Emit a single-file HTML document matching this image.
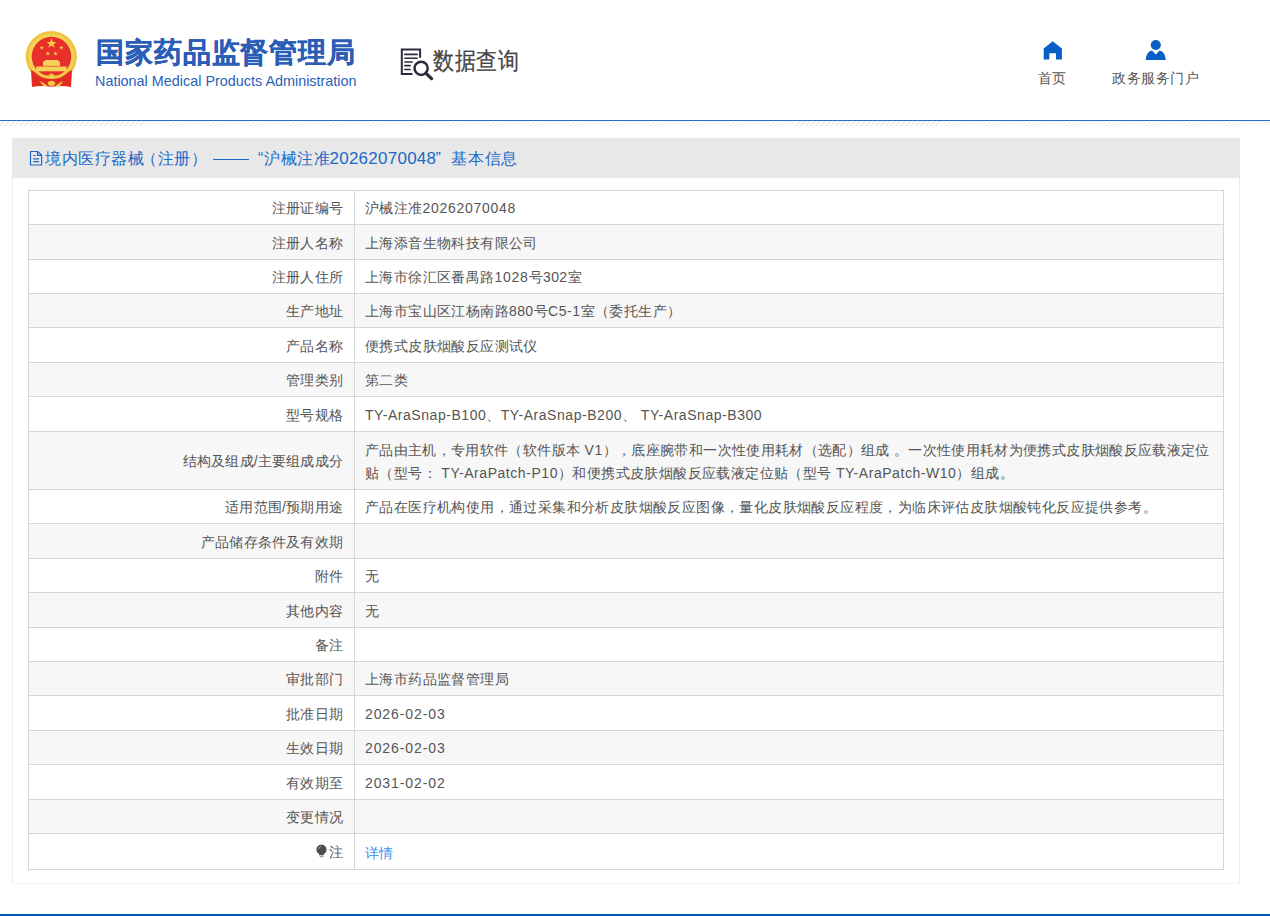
<!DOCTYPE html>
<html><head><meta charset="utf-8">
<style>
*{box-sizing:border-box;}
html,body{margin:0;padding:0;background:#fff;}
body{width:1270px;height:916px;overflow:hidden;position:relative;font-family:"Liberation Sans",sans-serif;color:#333;}
.hdr{position:absolute;left:0;top:0;width:1270px;height:121px;border-bottom:1px solid #2271c6;}
.hatch{position:absolute;left:0;top:121px;width:1270px;height:5px;
 background:repeating-linear-gradient(135deg,#fff 0,#fff 2.7px,#ececec 2.7px,#ececec 3.54px);}
.emb{position:absolute;left:20px;top:28px;width:62px;height:62px;}
.t1{position:absolute;left:96px;top:33px;font-size:28px;letter-spacing:0.9px;font-weight:bold;color:#2a5db6;white-space:nowrap;line-height:40px;-webkit-text-stroke:0.3px #2a5db6;}
.t2{position:absolute;left:95px;top:71px;font-size:14.4px;color:#2a5fb8;white-space:nowrap;line-height:20px;}
.dq{position:absolute;left:395px;top:44px;width:42px;height:38px;}
.dqt{position:absolute;left:433px;top:44px;font-size:21.5px;color:#454545;white-space:nowrap;line-height:34px;transform:scale(0.98,1.12);transform-origin:0 50%;-webkit-text-stroke:0.25px #454545;}
.nav{position:absolute;top:68px;font-size:14px;color:#555;line-height:20px;white-space:nowrap;}
.ico{position:absolute;}
.panel{position:absolute;left:12px;top:138px;width:1228px;height:746px;border:1px solid #ebebeb;border-top:none;border-bottom-color:#f3f3f3;}
.ph{position:absolute;left:-1px;top:0;width:1228px;height:40px;background:#e8e8e8;color:#1a6ac9;font-size:16px;line-height:40px;white-space:nowrap;}
.ph span{position:absolute;top:1px;letter-spacing:0.6px;}
.ph svg{position:absolute;left:16px;top:11px;}
table{position:absolute;left:15px;top:52px;width:1196px;border-collapse:collapse;font-size:14px;color:#555;table-layout:fixed;}
td{border:1px solid #d6d6d6;padding:2px 10px 0 10px;line-height:23px;vertical-align:middle;letter-spacing:0.4px;}
td.l{text-align:right;width:326px;padding-right:11px;letter-spacing:0.2px;}
tr.g td{background:#f7f7f7;}
td .d{letter-spacing:0.7px;}
td .e{letter-spacing:0.55px;}
td .d2{letter-spacing:0.9px;}
td .n{letter-spacing:0.35px;}
td a{color:#3d8ff0;text-decoration:none;position:relative;top:1px;}
.bulb{vertical-align:-1px;margin-right:2px;}
.foot{position:absolute;left:0;top:914px;width:1270px;height:2px;background:#0058be;}
</style></head><body>
<div class="hdr"></div>
<div class="hatch"></div>
<svg class="emb" viewBox="20 28 62 62">
 <circle cx="51.3" cy="56.6" r="25.6" fill="#f1c33c"/>
 <circle cx="51.3" cy="56.6" r="23" fill="#f6d257"/>
 <circle cx="51.5" cy="56.6" r="19.8" fill="#e8302a"/>
 <path d="M31 70 Q34 71.5 37 73 L51.5 77 L66 73 Q69 71.5 72 70 L71 87 Q61 85 51.5 86.8 Q42 85 32 87Z" fill="#e32b26"/>
 <path d="M34.5 68.5 Q42 76.5 51.5 75.5 Q61 76.5 68.5 68.5 L69.5 71 Q61 80 51.5 78.5 Q42 80 33.5 71Z" fill="#f2c840"/>
 <path d="M39.5 81 Q43 82 47.5 86 L44 86.5Z M63.5 81 Q60 82 55.5 86 L59 86.5Z" fill="#f4d04a"/>
 <ellipse cx="51.5" cy="83.3" rx="3.6" ry="2.6" fill="#f2c840"/>
 <circle cx="51.5" cy="76.2" r="2.6" fill="#f4cf48"/>
 <rect x="43" y="61.3" width="17" height="4.6" fill="#f6d45c"/>
 <rect x="45" y="60" width="13" height="2" fill="#f6d45c"/>
 <rect x="36.2" y="66.5" width="30.5" height="4.8" fill="#f6d45c"/>
 <polygon points="51.5,38.3 52.8,41.9 56.5,41.9 53.6,44.2 54.6,47.8 51.5,45.6 48.4,47.8 49.4,44.2 46.5,41.9 50.2,41.9" fill="#f5cf45"/>
 <polygon points="41.7,45.4 42.3,47 44,47 42.6,48 43.1,49.6 41.7,48.6 40.3,49.6 40.8,48 39.4,47 41.1,47" fill="#f2cc4a"/>
 <polygon points="61.3,45.4 61.9,47 63.6,47 62.2,48 62.7,49.6 61.3,48.6 59.9,49.6 60.4,48 59,47 60.7,47" fill="#f2cc4a"/>
 <polygon points="47.8,51.2 48.4,52.8 50.1,52.8 48.7,53.8 49.2,55.4 47.8,54.4 46.4,55.4 46.9,53.8 45.5,52.8 47.2,52.8" fill="#f2cc4a"/>
 <polygon points="55.5,51.2 56.1,52.8 57.8,52.8 56.4,53.8 56.9,55.4 55.5,54.4 54.1,55.4 54.6,53.8 53.2,52.8 54.9,52.8" fill="#f2cc4a"/>
</svg>
<div class="t1">国家药品监督管理局</div>
<div class="t2">National Medical Products Administration</div>
<svg class="dq" viewBox="395 44 42 38">
 <path d="M420.1 57.7 V49.6 H401.8 V73.9 H412.5" fill="none" stroke="#2b2b3b" stroke-width="2"/>
 <path d="M404.8 54.4 H417.2 M404.8 58.3 H417.2 M404.8 62 H412.2 M404.8 65.6 H410.2 M404.8 69.5 H410.2" stroke="#2b2b3b" stroke-width="1.6" stroke-linecap="round"/>
 <circle cx="421.1" cy="68.3" r="6.6" fill="none" stroke="#2b2b3b" stroke-width="2.5"/>
 <path d="M426.3 73.6 L431.6 78.6" stroke="#2b2b3b" stroke-width="3.2" stroke-linecap="round"/>
</svg>
<div class="dqt">数据查询</div>
<svg class="ico" style="left:1040px;top:38px" width="26" height="24" viewBox="1040 38 26 24"><path d="M1052.7 41.2 L1061.9 48.4 V59.4 H1056 V53.3 H1049.3 V59.4 H1043.7 V48.4Z" fill="#0a5fc6"/></svg>
<div class="nav" style="left:1038px;">首页</div>
<svg class="ico" style="left:1140px;top:36px" width="30" height="28" viewBox="1140 36 30 28"><circle cx="1155.8" cy="45" r="5.1" fill="#0a5fc6"/><path d="M1145.6 60 Q1146.2 52 1152 50.6 L1155.8 54.6 L1159.6 50.6 Q1165.2 52 1165.8 60Z" fill="#0a5fc6"/></svg>
<div class="nav" style="left:1112px;letter-spacing:0.5px">政务服务门户</div>

<div class="panel">
 <div class="ph"><svg width="16" height="18" viewBox="28 149 16 18"><path d="M30.5 151.5 H37.7 L41.6 155.2 V165 H30.5Z" fill="none" stroke="#1a6ac9" stroke-width="1.2" stroke-linejoin="round"/><path d="M37.5 151.5 V155.4 H41.6" fill="none" stroke="#1a6ac9" stroke-width="1.1"/><path d="M33.2 155.5 H35.6 M33.2 158.8 H39.1 M33.2 161.7 H39.1" stroke="#1a6ac9" stroke-width="1.2"/></svg><span style="left:33px">境内医疗器械</span><span style="left:129px">（注册）</span><i style="position:absolute;left:201px;top:20.6px;width:35.6px;height:1.4px;background:#1a6ac9;"></i><span style="left:246px;letter-spacing:0">“</span><span style="left:252px">沪械注准</span><span style="left:317.5px;font-size:17px;letter-spacing:0.25px">20262070048</span><span style="left:423.5px;letter-spacing:0">”</span><span style="left:439.4px">基本信息</span></div>
 <table>
<tr style="height:34px"><td class="l">注册证编号</td><td class="v">沪械注准<span class="d">20262070048</span></td></tr>
<tr class="g" style="height:35px"><td class="l">注册人名称</td><td class="v">上海添音生物科技有限公司</td></tr>
<tr style="height:34px"><td class="l">注册人住所</td><td class="v">上海市徐汇区番禺路<span class="d">1028</span>号302室</td></tr>
<tr class="g" style="height:34px"><td class="l">生产地址</td><td class="v">上海市宝山区江杨南路880号<span class="e">C5-1</span>室（委托生产）</td></tr>
<tr style="height:35px"><td class="l">产品名称</td><td class="v">便携式皮肤烟酸反应测试仪</td></tr>
<tr class="g" style="height:34px"><td class="l">管理类别</td><td class="v">第二类</td></tr>
<tr style="height:35px"><td class="l">型号规格</td><td class="v"><span class="e">TY-AraSnap-B100</span>、<span class="e">TY-AraSnap-B200</span>、 <span class="e">TY-AraSnap-B300</span></td></tr>
<tr class="g" style="height:58px"><td class="l">结构及组成/主要组成成分</td><td class="v"><span class="n">产品由主机，专用软件（软件版本 <span class="e">V1</span>），底座腕带和一次性使用耗材（选配）组成 。一次性使用耗材为便携式皮肤烟酸反应载液定位</span><br>贴（型号： <span class="e">TY-AraPatch-P10</span>）和便携式皮肤烟酸反应载液定位贴（型号 <span class="e">TY-AraPatch-W10</span>）组成。</td></tr>
<tr style="height:34px"><td class="l">适用范围/预期用途</td><td class="v">产品在医疗机构使用，通过采集和分析皮肤烟酸反应图像，量化皮肤烟酸反应程度，为临床评估皮肤烟酸钝化反应提供参考。</td></tr>
<tr class="g" style="height:35px"><td class="l">产品储存条件及有效期</td><td class="v"></td></tr>
<tr style="height:34px"><td class="l">附件</td><td class="v">无</td></tr>
<tr class="g" style="height:35px"><td class="l">其他内容</td><td class="v">无</td></tr>
<tr style="height:34px"><td class="l">备注</td><td class="v"></td></tr>
<tr class="g" style="height:34px"><td class="l">审批部门</td><td class="v">上海市药品监督管理局</td></tr>
<tr style="height:35px"><td class="l">批准日期</td><td class="v"><span class="d2">2026-02-03</span></td></tr>
<tr class="g" style="height:34px"><td class="l">生效日期</td><td class="v"><span class="d2">2026-02-03</span></td></tr>
<tr style="height:35px"><td class="l">有效期至</td><td class="v"><span class="d2">2031-02-02</span></td></tr>
<tr class="g" style="height:34px"><td class="l">变更情况</td><td class="v"></td></tr>
<tr style="height:36px"><td class="l"><svg class="bulb" width="11" height="14" viewBox="0.2 0 11.6 14"><path d="M6 0.5 C9.2 0.5 11.3 2.7 11.3 5.6 C11.3 7.9 9.8 9.2 8.6 10.2 L8.4 11.6 H3.6 L3.4 10.2 C2.2 9.2 0.7 7.9 0.7 5.6 C0.7 2.7 2.8 0.5 6 0.5Z" fill="#4d4d4d"/><path d="M3.8 12.3 H8.2 L7.6 13.6 H4.4Z" fill="#9a9a9a"/><path d="M3.2 4.6 Q3.6 2.8 5.2 2.3" stroke="#cfcfcf" stroke-width="0.9" fill="none"/></svg>注</td><td class="v"><a>详情</a></td></tr>
 </table>
</div>
<div class="foot"></div>
</body></html>
